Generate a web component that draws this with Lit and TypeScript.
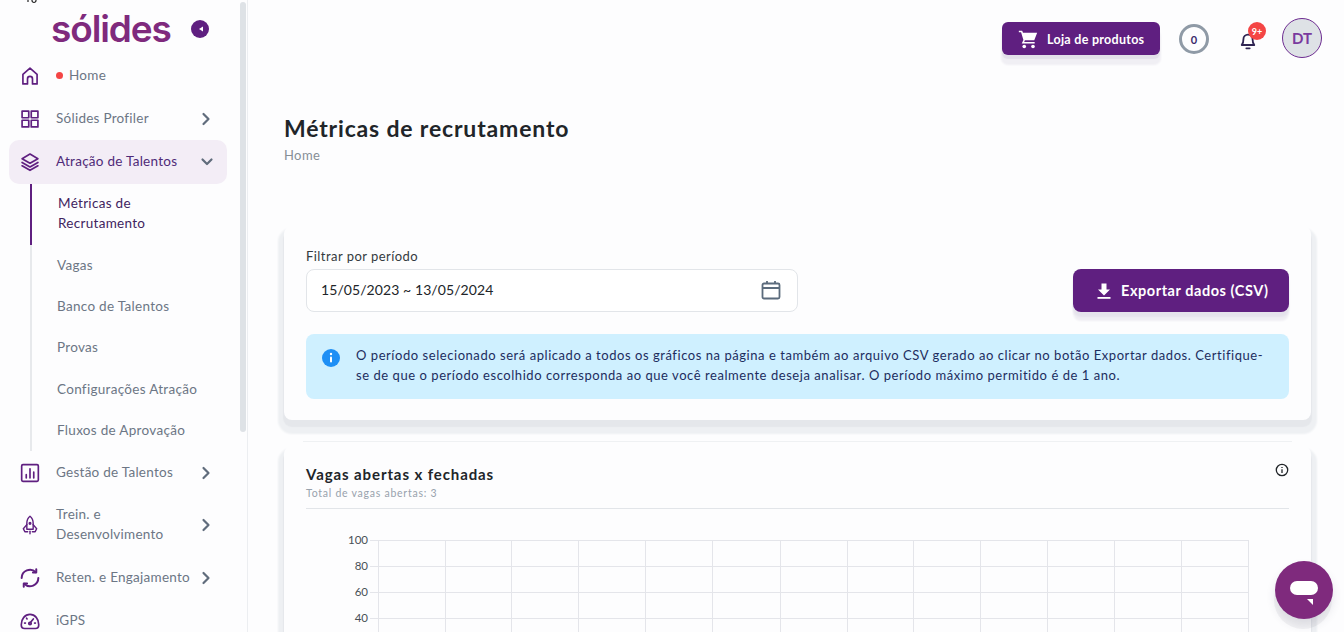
import { LitElement, html, css, svg } from "lit";
import { customElement } from "lit/decorators.js";

const ic = (body: unknown, size = 20) => html`<svg class="ic" width=${size} height=${size} viewBox="0 0 24 24" fill="none" stroke="currentColor" stroke-width="2" stroke-linecap="round" stroke-linejoin="round">${body}</svg>`;
const chevR = html`<svg class="chev" width="10" height="14" viewBox="0 0 10 14" fill="none" stroke="currentColor" stroke-width="2.2" stroke-linecap="round" stroke-linejoin="round"><path d="M2.5 2l5 5-5 5"/></svg>`;
const chevD = html`<svg class="chev down" width="14" height="10" viewBox="0 0 14 10" fill="none" stroke="currentColor" stroke-width="2.2" stroke-linecap="round" stroke-linejoin="round"><path d="M2.500 2.500l4.500 4.500 4.500-4.500"/></svg>`;

const icons = {
  home: svg`<path d="M3.500 21.500V10L12 2.500 20.500 10v11.500h-5.500v-6a3 3 0 0 0-6 0v6z"/>`,
  grid: svg`<rect x="2.500" y="2.500" width="8" height="8"/><rect x="13.500" y="2.500" width="8" height="8"/><rect x="2.500" y="13.500" width="8" height="8"/><rect x="13.500" y="13.500" width="8" height="8"/>`,
  layers: svg`<path d="M12 2.500l9.500 5.500-9.500 5.500L2.500 8z"/><path d="M2.500 12.500l9.500 5.500 9.500-5.500"/><path d="M2.500 16.500l9.500 5.500 9.500-5.500"/>`,
  chart: svg`<rect x="2" y="2" width="20" height="20" rx="1.500"/><path d="M7.500 18v-4M12 18V7M16.500 18v-7"/>`,
  rocket: svg`<g stroke-width="1.700"><path d="M12 1.500c2.800 2.200 3.800 5.200 3.800 8.500v7H8.200v-7c0-3.300 1-6.300 3.800-8.500z"/><path d="M8.200 11.500L4 16.500l1.800 3.500h3.400M15.800 11.500L20 16.500l-1.800 3.500h-3.400"/><circle cx="12" cy="10" r="1" fill="currentColor"/><path d="M12 19.500v3"/></g>`,
  sync: svg`<path stroke-width="2.400" d="M22 12a10 10 0 0 1-17 7M2 12A10 10 0 0 1 19 5"/><path stroke-width="2.400" d="M19.500 1.500V5.500h-4M4.500 22.500v-4h4"/>`,
  gauge: svg`<path d="M5.500 21h13c2.500 0 4-1.500 4-4.500C22.500 9.500 18 4 12 4S1.500 9.500 1.500 16.500C1.500 19.500 3 21 5.500 21z"/><path d="M12 14.500l4-5"/><circle cx="12" cy="15" r="1.500"/><path d="M6.500 14.500h-1M18.500 14.500h-1M8.500 9.500l-.6-.8"/>`,
};

const infoText = "O período selecionado será aplicado a todos os gráficos na página e também ao arquivo CSV gerado ao clicar no botão Exportar dados. Certifique-se de que o período escolhido corresponda ao que você realmente deseja analisar. O período máximo permitido é de 1 ano.";

const vLines = [378, 445, 511, 578, 645, 712, 780, 847, 913, 980, 1047, 1114, 1181, 1248];
const hLines: [number, string][] = [[20, "100"], [46, "80"], [72, "60"], [98, "40"]];

@customElement("app-root")
export class AppRoot extends LitElement {
  static styles = css`
    :host { display: block; position: relative; width: 1344px; height: 632px; overflow: hidden; background: #fdfdfe; font-family: "Lato", "Noto Sans", sans-serif; color: #212529; }
    * { box-sizing: border-box; }
    .page { display: flex; height: 632px; }
    .side { width: 248px; flex: none; height: 632px; border-right: 1px solid #eceef1; position: relative; overflow: hidden; }
    .stray { position: absolute; left: 26px; top: -3px; }
    .scroll { position: absolute; left: 240px; top: 2px; width: 6px; height: 430px; border-radius: 3px; background: #dee2e6; }
    .logo { height: 54px; display: flex; align-items: flex-start; padding-left: 51px; position: relative; }
    .logo-t { font-family: "Inter", sans-serif; font-size: 37px; line-height: 54px; font-weight: 600; color: #7f2a7d; letter-spacing: -1.1px; margin-top: 2px; }
    .logo-b { position: absolute; left: 191px; top: 20px; width: 18px; height: 18px; }
    .item { display: flex; align-items: center; margin: 0 21px 0 9px; padding: 0 16px 0 11px; width: 218px; height: 43px; font-size: 13.500px; letter-spacing: 0.26px; color: #6c7685; border-radius: 10px; }
    .item .ic { color: #5f1f80; flex: none; margin-right: 16px; }
    .item .lab { flex: 1; line-height: 20px; white-space: nowrap; padding-bottom: 2px; }
    .item.active { height: 44px; background: #f3edf6; color: #4f2a78; }
    .item.tall { height: 62px; }
    .chev { flex: none; color: #606c7c; }
    .chev.down { margin-right: -3px; }
    .dot { display: inline-block; width: 7px; height: 7px; border-radius: 50%; background: #f44545; margin-right: 6px; vertical-align: 1px; }
    .sub { margin-left: 30px; border-left: 2px solid #e7e9ec; height: 267px; }
    .sub a { display: flex; align-items: center; height: 41.300px; padding: 0 0 2px 25px; margin-left: -2px; font-size: 13.500px; letter-spacing: 0.3px; color: #6c7685; line-height: 20px; border-left: 2px solid transparent; }
    .sub a.cur { height: 61px; color: #41245f; border-left-color: #5f1f80; padding-left: 26px; padding-bottom: 4px; }
    .main { flex: 1; min-width: 0; padding: 0 33px 0 36px; position: relative; }
    .head { height: 78px; display: flex; align-items: flex-start; justify-content: flex-end; margin-right: -11px; }
    .shop { margin-top: 22px; width: 158px; height: 33px; border-radius: 6px; background: #5f1f80; color: #fff; display: flex; align-items: center; padding: 1px 0 0 16px; font-size: 12.500px; font-weight: 700; box-shadow: 0 4px 1px #e3e0ea, 0 9px 2px 1px #f0eff4; letter-spacing: 0.28px; }
    .shop svg { margin-right: 9px; }
    .count { margin: 24px 0 0 19px; width: 30px; height: 30px; border-radius: 50%; border: 3px solid #8f9aa6; display: flex; align-items: center; justify-content: center; font-size: 11px; font-weight: 700; color: #3a2a6a; }
    .bell { margin: 25px 0 0 29px; width: 20px; height: 30px; position: relative; color: #2e2452; padding-top: 5px; }
    .badge { position: absolute; left: 10px; top: -3px; width: 18px; height: 18px; border-radius: 50%; background: #f44545; color: #fff; font-size: 9px; font-weight: 700; display: flex; align-items: center; justify-content: center; }
    .avatar { margin: 18px 0 0 24px; width: 40px; height: 40px; border-radius: 50%; background: #dee2e6; border: 1px solid #6d2c91; display: flex; align-items: center; justify-content: center; color: #7a3a9e; font-weight: 700; font-size: 15px; }
    h1 { margin: 37px 0 0; font-size: 23px; line-height: 26px; font-weight: 700; color: #212529; letter-spacing: 0.83px; }
    .crumb { margin-top: 6px; font-size: 13px; line-height: 16px; color: #868e96; letter-spacing: 0.4px; }
    .card { background: #fdfdfe; border-radius: 8px; box-shadow: 0 6px 1px 1px #e5e7eb, 0 8px 2px 6px #eef0f3; padding: 0 22px; }
    .c1 { margin-top: 63px; height: 194px; }
    .label { padding-top: 21px; font-size: 13px; line-height: 18px; color: #343a40; letter-spacing: 0.45px; }
    .row { margin-top: 4px; display: flex; justify-content: space-between; }
    .input { width: 492px; height: 43px; border: 1px solid #e2e5e9; border-radius: 8px; display: flex; align-items: center; justify-content: space-between; padding: 0 16px 2px 14px; font-size: 14px; letter-spacing: 0.08px; color: #212529; background: #fff; }
    .input svg { color: #5b6b7c; }
    .export { width: 216px; height: 43px; border-radius: 8px; background: #5f1f80; color: #fff; display: flex; align-items: center; padding-left: 22px; font-size: 14.500px; font-weight: 700; letter-spacing: 0.55px; box-shadow: 0 5px 2px #e5e3ec, 0 9px 2px #f0eff4; }
    .export svg { margin-right: 8px; }
    .info { margin-top: 22px; height: 65px; background: #cff0ff; border-radius: 8px; display: flex; padding: 11px 20px 0 15px; font-size: 13px; line-height: 20px; letter-spacing: 0.55px; color: #1d2d5e; }
    .info svg { flex: none; margin: 3px 15px 0 0; }
    .rule { height: 1px; background: #eff1f3; margin: 21px 19px 0 19px; }
    .c2 { margin-top: 4px; height: 400px; position: relative; }
    .t2 { padding-top: 18px; font-size: 15px; line-height: 20px; font-weight: 700; color: #212529; letter-spacing: 0.9px; }
    .s2 { margin-top: 2px; font-size: 10.500px; line-height: 14px; color: #98a2ad; letter-spacing: 0.75px; padding-bottom: 8px; border-bottom: 1px solid #e2e5e9; }
    .i2 { position: absolute; right: 22px; top: 17px; color: #212529; }
    .chart { display: block; margin: 11px 0 0 -22px; }
    .chart text { font-family: "Lato", sans-serif; font-size: 11.500px; fill: #495057; text-anchor: end; }
    .fab { position: absolute; left: 1275px; top: 561px; width: 58px; height: 58px; border-radius: 50%; background: #7f2a7d; box-shadow: 0 6px 10px rgba(60,60,90,.13), -1px 10px 0 rgba(60,60,90,.06); }
    .fab svg { position: absolute; left: 14px; top: 20px; }
  `;

  render() {
    return html`
      <div class="page">
        <aside class="side">
          <svg class="stray" width="12" height="7" viewBox="0 0 12 7" fill="none" stroke="#222" stroke-width="1.200"><circle cx="8" cy="3.500" r="2"/><path d="M2 2v3"/></svg>
          <div class="logo">
            <span class="logo-t">sólides</span>
            <svg class="logo-b" viewBox="0 0 18 18"><circle cx="9" cy="9" r="9" fill="#5f1f80"/><path d="M8 9l4-2.500v5z" fill="#fff"/></svg>
          </div>
          <div class="item">${ic(icons.home)}<span class="lab"><span class="dot"></span>Home</span></div>
          <div class="item">${ic(icons.grid)}<span class="lab">Sólides Profiler</span>${chevR}</div>
          <div class="item active">${ic(icons.layers)}<span class="lab">Atração de Talentos</span>${chevD}</div>
          <div class="sub">
            <a class="cur">Métricas de<br />Recrutamento</a>
            <a>Vagas</a><a>Banco de Talentos</a><a>Provas</a><a>Configurações Atração</a><a>Fluxos de Aprovação</a>
          </div>
          <div class="item">${ic(icons.chart)}<span class="lab">Gestão de Talentos</span>${chevR}</div>
          <div class="item tall">${ic(icons.rocket)}<span class="lab">Trein. e<br />Desenvolvimento</span>${chevR}</div>
          <div class="item">${ic(icons.sync)}<span class="lab">Reten. e Engajamento</span>${chevR}</div>
          <div class="item">${ic(icons.gauge)}<span class="lab">iGPS</span></div>
          <div class="scroll"></div>
        </aside>
        <main class="main">
          <div class="head">
            <div class="shop">
              <svg width="20" height="20" viewBox="0 0 24 24" fill="#fff"><path d="M1 2h4l1 2.500h17l-3.500 9H8.300l-.9 2H20v2H4.500l2-4.300L3.700 4H1z"/><circle cx="7.500" cy="21" r="2.200"/><circle cx="18" cy="21" r="2.200"/></svg>
              Loja de produtos
            </div>
            <div class="count">0</div>
            <div class="bell">
              <svg width="20" height="20" viewBox="0 0 24 24" fill="none" stroke="currentColor" stroke-width="2.200" stroke-linejoin="round" stroke-linecap="round"><path d="M4.500 18c1.500-1.500 2-3.500 2-7a5.500 5.500 0 0 1 11 0c0 3.500.5 5.500 2 7z"/><path d="M10 22h4"/></svg>
              <div class="badge">9+</div>
            </div>
            <div class="avatar">DT</div>
          </div>
          <h1>Métricas de recrutamento</h1>
          <div class="crumb">Home</div>
          <section class="card c1">
            <div class="label">Filtrar por período</div>
            <div class="row">
              <div class="input">
                <span>15/05/2023 ~ 13/05/2024</span>
                <svg width="20" height="20" viewBox="0 0 20 20" fill="none" stroke="currentColor" stroke-width="1.800"><rect x="1.500" y="3.500" width="17" height="15" rx="1.500"/><path d="M2 8h16M6 1v3M14 1v3"/></svg>
              </div>
              <div class="export">
                <svg width="18" height="18" viewBox="0 0 18 18" fill="#fff"><path d="M6.500 1.500h5v6h3.500L9 13.500 3 7.500h3.500z"/><rect x="2.500" y="15" width="13" height="1.800"/></svg>
                Exportar dados (CSV)
              </div>
            </div>
            <div class="info">
              <svg width="20" height="20" viewBox="0 0 20 20"><circle cx="10" cy="10" r="9" fill="#1e8ff5"/><rect x="9" y="8.500" width="2" height="6" rx="1" fill="#fff"/><circle cx="10" cy="6" r="1.200" fill="#fff"/></svg>
              <span>${infoText}</span>
            </div>
          </section>
          <div class="rule"></div>
          <section class="card c2">
            <div class="t2">Vagas abertas x fechadas</div>
            <div class="s2">Total de vagas abertas: 3</div>
            <svg class="i2" width="14" height="14" viewBox="0 0 14 14" fill="none" stroke="currentColor" stroke-width="1.300"><circle cx="7" cy="7" r="5.700"/><path d="M7 6.300v3.700M7 4v1"/></svg>
            <svg class="chart" width="1027" height="160" viewBox="284 520 1027 160">
              ${hLines.map(([y, l]) => svg`<text x="368" y=${524 + y}>${l}</text><line x1="370" x2="1248" y1=${520.5 + y} y2=${520.5 + y} stroke="#e4e5ea"/>`)}
              <line x1="370" x2="1248" y1="644.500" y2="644.500" stroke="#e4e5ea"/>
              ${vLines.map((x) => svg`<line x1=${x + 0.5} x2=${x + 0.5} y1="540" y2="680" stroke="#e4e5ea"/>`)}
            </svg>
          </section>
        </main>
      </div>
      <div class="fab">
        <svg width="30" height="26" viewBox="0 0 30 26" fill="#fff"><rect x="1" y="0" width="28" height="14" rx="7"/><path d="M18 18h6v6z"/></svg>
      </div>
    `;
  }
}
